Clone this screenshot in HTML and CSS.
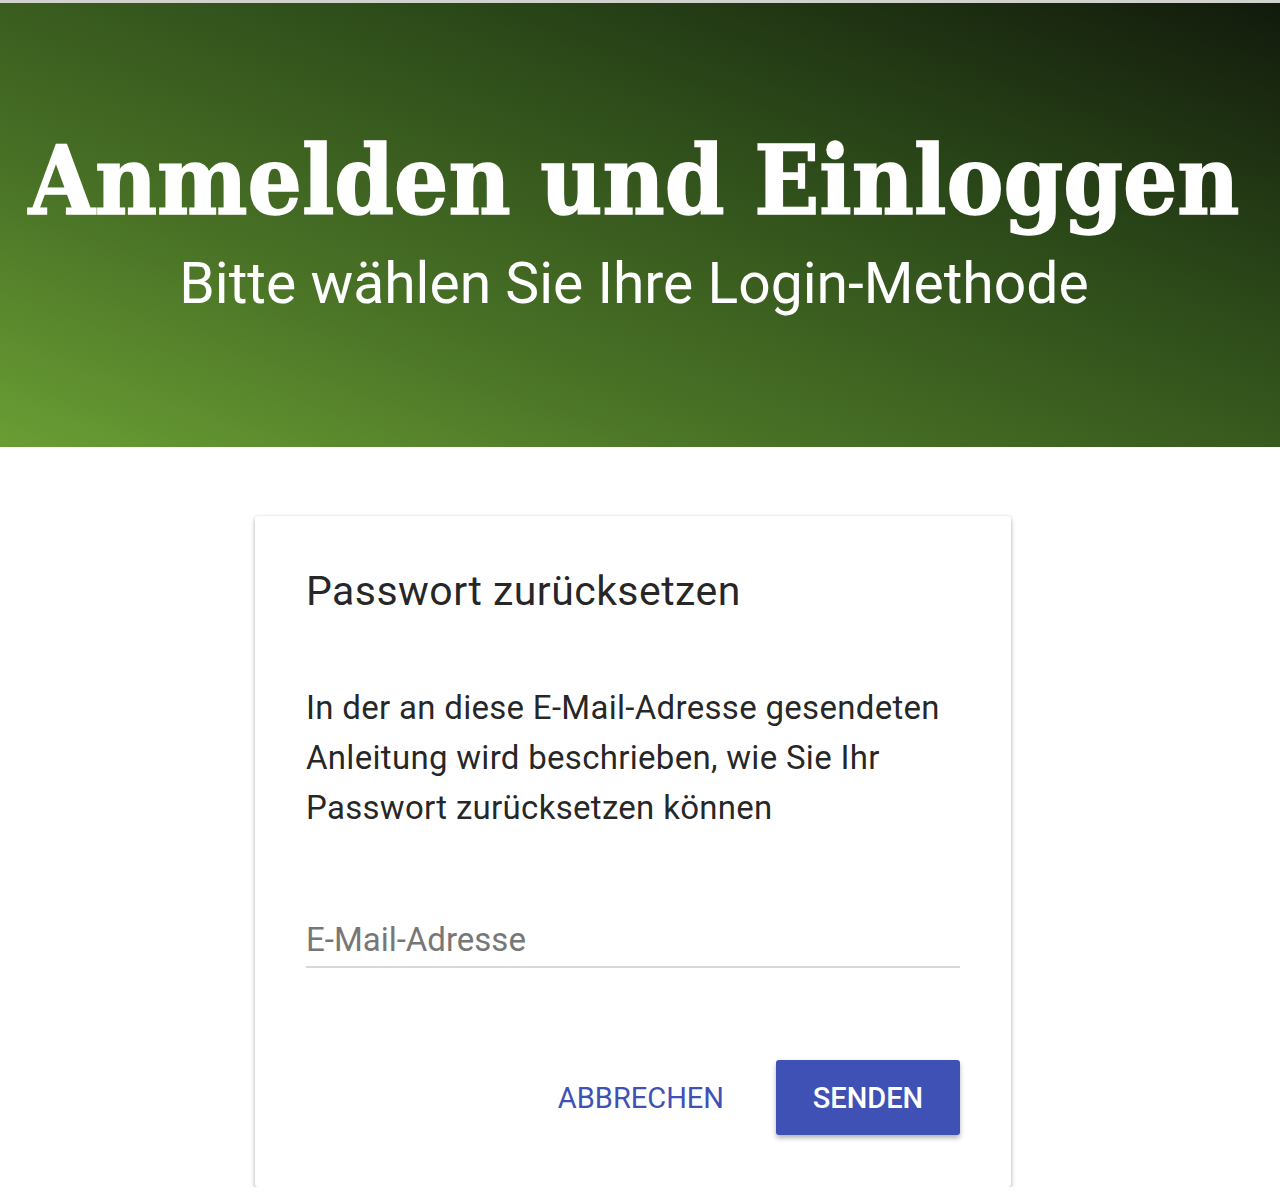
FILE: index.html
```html
<!DOCTYPE html>
<html lang="de">
<head>
    <meta charset="UTF-8">
    <meta name="viewport" content="width=device-width, initial-scale=1.0">
    <title>Anmelden und Einloggen</title>
    <link rel="stylesheet" href="styles.css">
</head>
<body>
    <header class="hero">
        <h1 class="hero-title">Anmelden und Einloggen</h1>
        <p class="hero-sub">Bitte wählen Sie Ihre Login-Methode</p>
    </header>

    <main class="page">
        <div class="dialog">
            <h2 class="dialog-title">Passwort zurücksetzen</h2>
            <p class="dialog-text">In der an diese E-Mail-Adresse gesendeten Anleitung wird beschrieben, wie Sie Ihr Passwort zurücksetzen können</p>
            <div class="field">
                <input class="field-input" type="email" placeholder="E-Mail-Adresse">
            </div>
            <div class="actions">
                <button class="btn btn-flat">Abbrechen</button>
                <button class="btn btn-raised">Senden</button>
            </div>
        </div>
    </main>
</body>
</html>
```

FILE: styles.css
```css
body {
    margin: 0;
    padding: 0;
    background: #fff;
    font-family: Roboto, "Noto Sans", Arial, sans-serif;
}

.hero {
    border-top: 3px solid #cfd3cc;
    height: 444px;
    background: linear-gradient(200deg, #121a0c 0%, #2c4a19 35%, #4a7326 70%, #6a9e34 100%);
    color: #fff;
    text-align: center;
    padding-right: 12px;
    overflow: hidden;
}

.hero-title {
    margin: 0;
    padding-top: 118px;
    font-family: "DejaVu Serif Condensed", "DejaVu Serif", "Liberation Serif", serif;
    font-stretch: condensed;
    font-weight: bold;
    font-size: 95px;
    line-height: 120px;
    white-space: nowrap;
    -webkit-text-stroke: 1.5px #fff;
}

.hero-sub {
    margin: 3px 0 0;
    font-size: 57px;
    line-height: 80px;
    font-weight: 400;
}

.page {
    display: flex;
    justify-content: center;
    padding: 69px 14px 0 0;
}

.dialog {
    width: 756px;
    box-sizing: border-box;
    padding: 47px 51px 52px 51px;
    background: #fff;
    border-radius: 3px;
    box-shadow: 0 3px 5px rgba(0, 0, 0, 0.25), 0 0 3px rgba(0, 0, 0, 0.12);
}

.dialog-title {
    margin: 0;
    font-size: 41px;
    font-weight: 400;
    line-height: 56px;
    letter-spacing: 0.45px;
    color: rgba(0, 0, 0, 0.87);
}

.dialog-text {
    margin: 64px 0 0;
    font-size: 33px;
    line-height: 50px;
    letter-spacing: 0.3px;
    color: rgba(0, 0, 0, 0.87);
}

.field {
    margin-top: 86px;
}

.field-input {
    display: block;
    width: 100%;
    box-sizing: border-box;
    border: none;
    border-bottom: 2px solid #d7d7d7;
    padding: 0 0 7px;
    font-family: inherit;
    font-size: 33px;
    line-height: 40px;
    height: 49px;
    color: rgba(0, 0, 0, 0.87);
    background: transparent;
    outline: none;
}

.field-input::placeholder {
    color: #777;
}

.actions {
    display: flex;
    justify-content: flex-end;
    align-items: center;
    gap: 52px;
    margin-top: 92px;
}

.btn {
    font-family: inherit;
    font-size: 29px;
    font-weight: 500;
    text-transform: uppercase;
    border: none;
    cursor: pointer;
    height: 75px;
    border-radius: 3px;
}

.btn-flat {
    background: none;
    color: #3f51b5;
    font-weight: 400;
    padding: 0;
}

.btn-raised {
    width: 184px;
    background: #3f51b5;
    color: #fff;
    box-shadow: 0 3px 5px rgba(0, 0, 0, 0.3);
}
```
